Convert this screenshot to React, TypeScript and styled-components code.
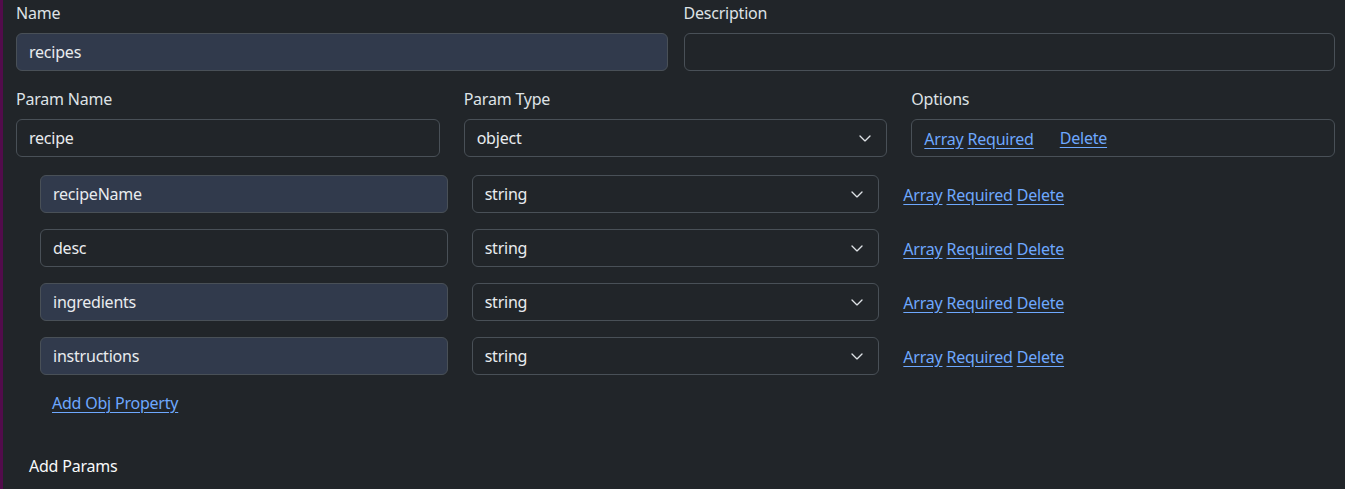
import React from "react";
import styled, { createGlobalStyle } from "styled-components";

const Global = createGlobalStyle`
  html, body { margin: 0; padding: 0; background: #212529; }
  body {
    font-family: "Noto Sans", "Open Sans", sans-serif;
    font-size: 16px;
    line-height: 1.5;
    color: #dee2e6;
    letter-spacing: -0.22px;
  }
  * { box-sizing: border-box; }
`;

const Page = styled.div`
  display: flex;
  min-height: 489px;
  height: 489px;
  overflow: hidden;
`;

const SideStrip = styled.div`
  width: 3px;
  flex: 0 0 3px;
  background: #520c4b;
`;

const Main = styled.div`
  flex: 1;
  padding: 1px 10px 0 13px;
`;

const Grid = styled.div<{ $cols: number; $gap: number }>`
  display: grid;
  grid-template-columns: repeat(${(p) => p.$cols}, 1fr);
  column-gap: ${(p) => p.$gap}px;
`;

const Field = styled.div`
  display: flex;
  flex-direction: column;
  min-width: 0;
`;

const Label = styled.label`
  display: block;
  margin-bottom: 8px;
  line-height: 24px;
  color: #dee2e6;
`;

const Input = styled.div<{ $filled?: boolean }>`
  height: 38px;
  border: 1px solid #495057;
  border-radius: 6px;
  padding: 0 12px;
  display: flex;
  align-items: center;
  background: ${(p) => (p.$filled ? "#313a4c" : "#212529")};
  color: #e9ecef;
  min-width: 0;
`;

const Select = styled(Input)`
  justify-content: space-between;
  padding-right: 14px;
`;

const Chevron = () => (
  <svg width="14" height="10" viewBox="0 0 16 12" aria-hidden>
    <path d="M2 3.5l6 6 6-6" fill="none" stroke="#dee2e6" strokeWidth="1.6" strokeLinecap="round" strokeLinejoin="round" />
  </svg>
);

const SecondRow = styled(Grid)`
  margin-top: 16px;
`;

const OptionsBox = styled(Input)`
  gap: 26px;
`;

const LinkGroup = styled.span`
  display: inline-flex;
  gap: 4px;
`;

const A = styled.a<{ $shift?: number }>`
  color: #6ea8fe;
  text-decoration: underline;
  text-underline-offset: 3px;
  cursor: pointer;
  position: relative;
  top: ${(p) => p.$shift ?? 1}px;
`;

const Nested = styled.div`
  display: flex;
  flex-direction: column;
  gap: 16px;
  padding: 18px 24px 0 24px;
`;

const NestedRow = styled(Grid)`
  align-items: center;
`;

const AddObj = styled.div`
  padding: 16px 0 0 36px;
`;

const AddParams = styled.div`
  padding: 39px 0 0 13px;
  color: #f8f9fa;
`;

const props = [
  { name: "recipeName", filled: true },
  { name: "desc", filled: false },
  { name: "ingredients", filled: true },
  { name: "instructions", filled: true },
];

export default function App() {
  return (
    <>
      <Global />
      <Page>
        <SideStrip />
        <Main>
          <Grid $cols={2} $gap={16}>
            <Field>
              <Label>Name</Label>
              <Input $filled>recipes</Input>
            </Field>
            <Field>
              <Label>Description</Label>
              <Input />
            </Field>
          </Grid>
          <SecondRow $cols={3} $gap={24}>
            <Field>
              <Label>Param Name</Label>
              <Input>recipe</Input>
            </Field>
            <Field>
              <Label>Param Type</Label>
              <Select>
                <span>object</span>
                <Chevron />
              </Select>
            </Field>
            <Field>
              <Label>Options</Label>
              <OptionsBox>
                <LinkGroup>
                  <A>Array</A>
                  <A>Required</A>
                </LinkGroup>
                <A $shift={0}>Delete</A>
              </OptionsBox>
            </Field>
          </SecondRow>
          <Nested>
            {props.map((p) => (
              <NestedRow key={p.name} $cols={3} $gap={24}>
                <Input $filled={p.filled}>{p.name}</Input>
                <Select>
                  <span>string</span>
                  <Chevron />
                </Select>
                <LinkGroup>
                  <A>Array</A>
                  <A>Required</A>
                  <A>Delete</A>
                </LinkGroup>
              </NestedRow>
            ))}
          </Nested>
          <AddObj>
            <A $shift={0}>Add Obj Property</A>
          </AddObj>
          <AddParams>Add Params</AddParams>
        </Main>
      </Page>
    </>
  );
}
